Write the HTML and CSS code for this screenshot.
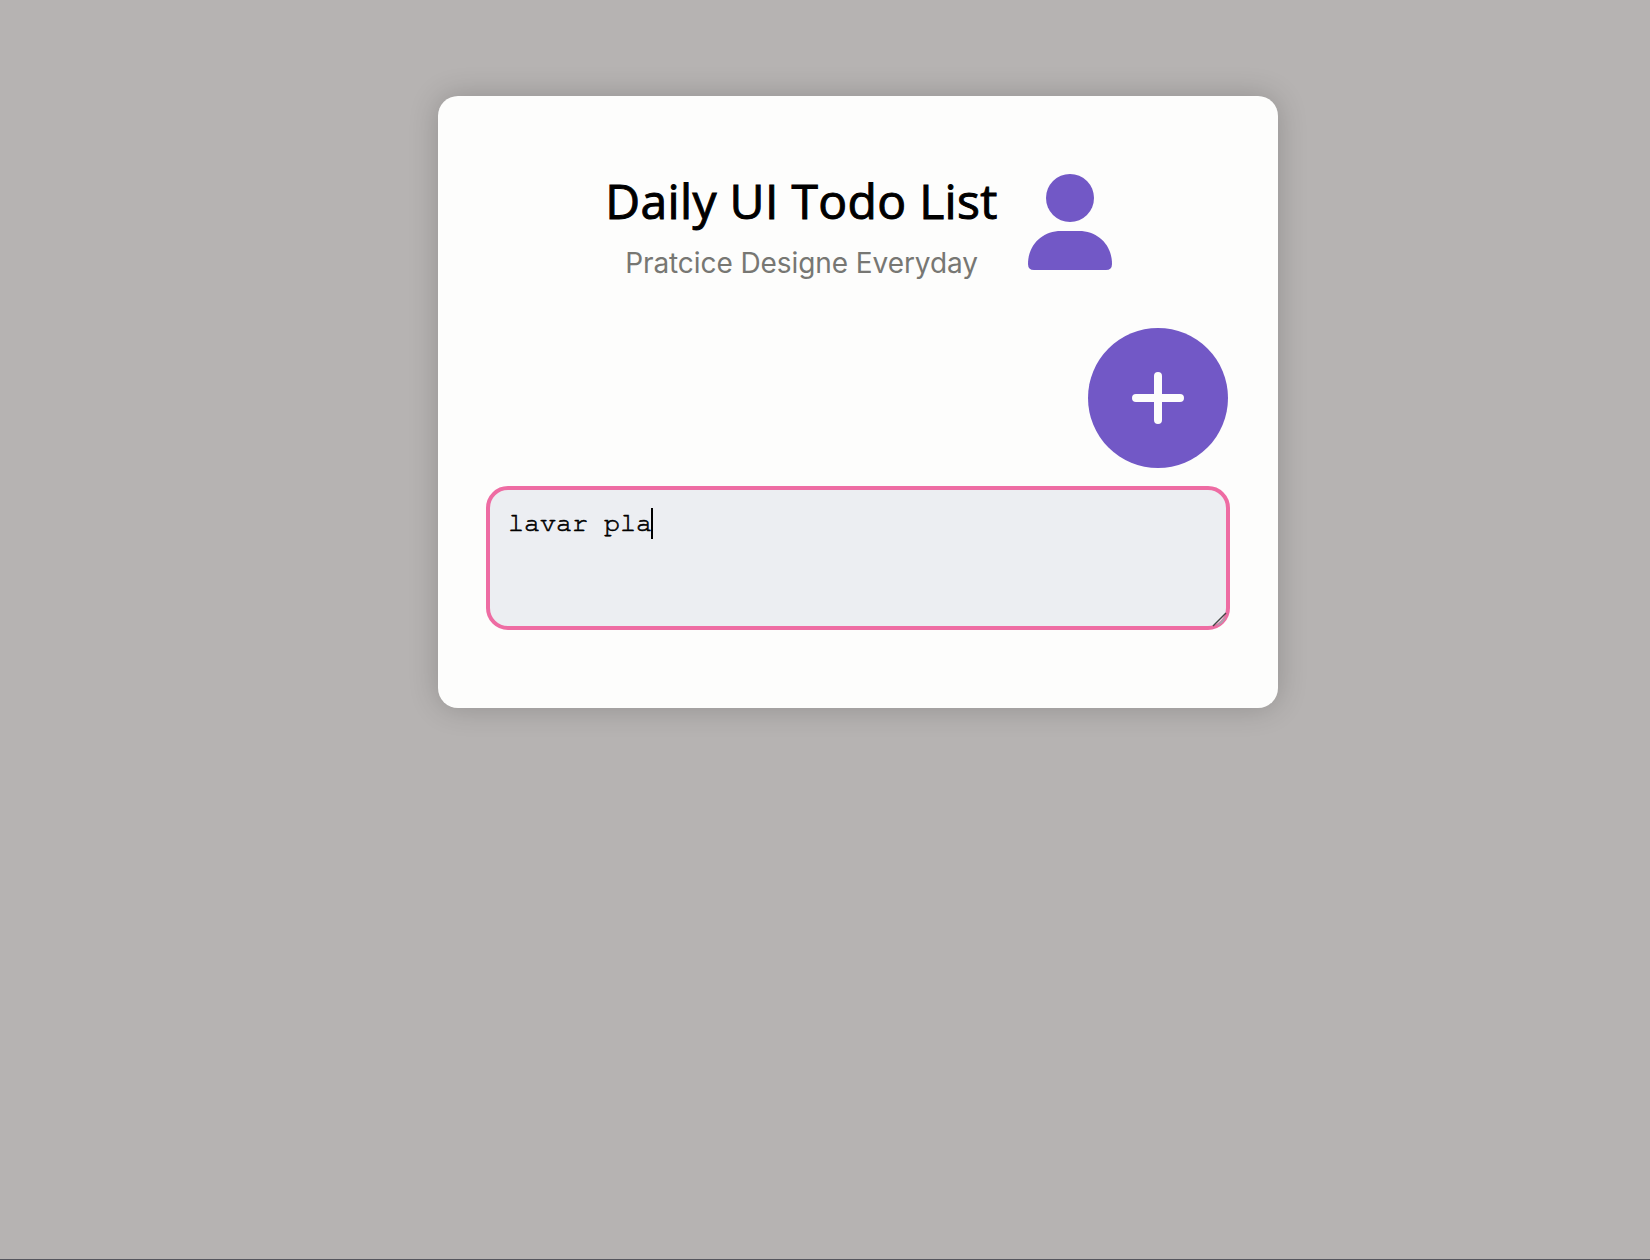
FILE: index.html
```html
<!DOCTYPE html>
<html lang="en">
<head>
<meta charset="utf-8">
<title>Daily UI Todo List</title>
<link rel="stylesheet" href="styles.css">
</head>
<body>
<main class="card">
  <header class="header">
    <div class="heading">
      <h1 class="title">Daily UI Todo List</h1>
      <p class="subtitle">Pratcice Designe Everyday</p>
    </div>
    <svg class="user" width="84" height="96" viewBox="0 0 84 96" fill="currentColor" aria-hidden="true">
      <circle cx="42" cy="24" r="24"/>
      <path d="M33 57H51C70 57 84 71 84 90Q84 96 78 96H6Q0 96 0 90C0 71 14 57 33 57Z"/>
    </svg>
  </header>
  <button class="add" aria-label="Add">
    <svg width="52" height="52" viewBox="0 0 52 52" fill="none" stroke="currentColor" stroke-width="8" stroke-linecap="round"><path d="M26 4V48M4 26H48"/></svg>
  </button>
  <div class="field">
    <span class="value">lavar pla</span><span class="caret"></span>
    <svg class="grip" width="17" height="17" viewBox="0 0 17 17" fill="none"><path d="M1 14L14 1" stroke="#444" stroke-width="1.5"/><path d="M4 14Q12 12 14 4Z" fill="#aaa2ad"/></svg>
  </div>
</main>
</body>
</html>
```
FILE: styles.css
```css
* { box-sizing: border-box; }
body {
  margin: 0;
  height: 1260px;
  padding: 96px 0 0 438px;
  background: #b6b3b2;
  border-bottom: 1px solid #55555c;
  font-family: Inter, "Liberation Sans", sans-serif;
}
.card {
  display: flex;
  flex-direction: column;
  width: 840px;
  height: 612px;
  padding: 78px 48px;
  border-radius: 20px;
  background: #fdfdfc;
  box-shadow: 0 0 30px rgba(0, 0, 0, 0.2);
}
.header {
  display: flex;
  justify-content: center;
  gap: 29px;
  height: 154px;
}
.heading { width: 394px; text-align: center; white-space: nowrap; }
.title {
  margin: 0;
  color: #000;
  font: 500 48px/54px "Open Sans", sans-serif;
  letter-spacing: 0.34px;
  -webkit-text-stroke: 1px #000;
}
.subtitle {
  margin: 18px 0 0;
  color: #777773;
  font-size: 28px;
  line-height: 34px;
  letter-spacing: -0.08px;
}
.user { flex: none; color: #7258c6; }
.add {
  display: grid;
  place-items: center;
  align-self: flex-end;
  width: 140px;
  height: 140px;
  margin-right: 2px;
  padding: 0;
  border: 0;
  border-radius: 50%;
  background: #7258c6;
  color: #fdfdfc;
}
.field {
  position: relative;
  display: flex;
  align-items: flex-start;
  width: 744px;
  height: 144px;
  margin-top: 18px;
  padding: 18px 18px;
  border: 4px solid #ee6ca3;
  border-radius: 22px;
  background: #eceef2;
}
.value {
  color: #000;
  font: 26.667px/30px "Nimbus Mono PS", FreeMono, "Courier 10 Pitch", "Liberation Mono", monospace;
  -webkit-text-stroke: 0.6px #000;
}
.caret { width: 2px; height: 31px; margin-left: -1px; background: #000; }
.grip { position: absolute; right: -3px; bottom: -3px; }
```
